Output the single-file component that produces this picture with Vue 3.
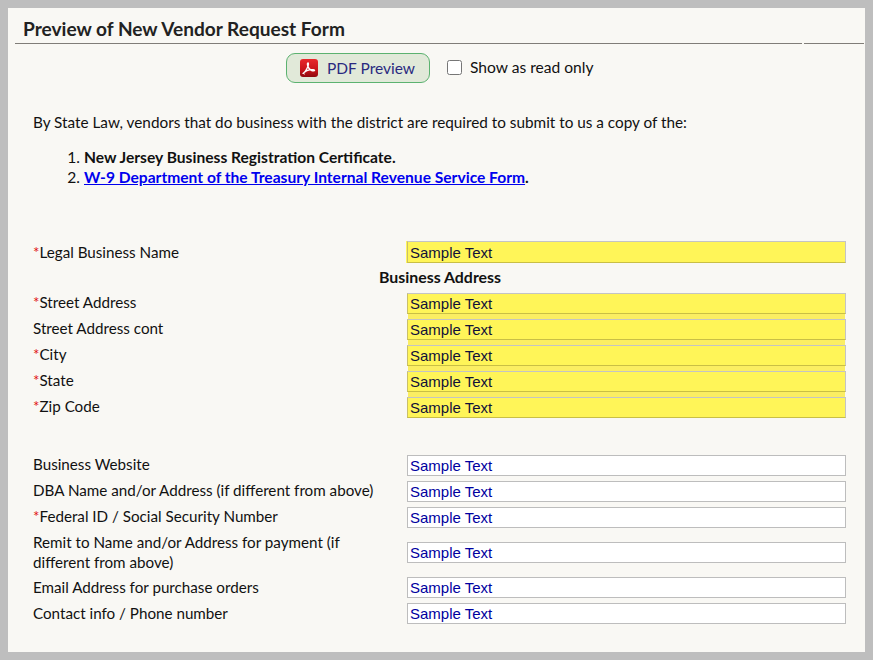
<script setup>
const required = [
  { label: 'Street Address', req: true },
  { label: 'Street Address cont', req: false },
  { label: 'City', req: true },
  { label: 'State', req: true },
  { label: 'Zip Code', req: true },
]
const optional = [
  { label: 'Business Website', req: false, up: true },
  { label: 'DBA Name and/or Address (if different from above)', req: false, up: true },
  { label: 'Federal ID / Social Security Number', req: true, up: true },
  { label: 'Remit to Name and/or Address for payment (if different from above)', req: false },
  { label: 'Email Address for purchase orders', req: false },
  { label: 'Contact info / Phone number', req: false },
]
</script>

<template>
  <div class="frame">
    <div class="panel">
      <div class="head">
        <h1 class="title">Preview of New Vendor Request Form</h1>
        <div class="rule"><span class="rule-a"></span><span class="rule-b"></span></div>
      </div>

      <div class="actions">
        <button class="pdf" type="button">
          <svg class="pdf-icon" width="18" height="18" viewBox="0 0 18 18" aria-hidden="true">
            <defs>
              <linearGradient id="pdfg" x1="0" y1="0" x2="0" y2="1">
                <stop offset="0" stop-color="#e8282c" />
                <stop offset="0.6" stop-color="#c8141a" />
                <stop offset="1" stop-color="#8e0a0e" />
              </linearGradient>
            </defs>
            <rect width="18" height="18" rx="3" fill="url(#pdfg)" />
            <path d="M3.2 14.2c1.800-1 3.600-4 4.900-7.200.4-1.200.6-3-.1-3.200-.8 0-.7 1.900-.3 3 .9 2.600 2.500 4.400 4 4.900 1 .3 2.800.3 2.900-.4 0-.8-2.200-.9-4-.6-2.500.4-5 1.300-6.200 2.500-.5.500-.9 1-.8 1.200z" fill="none" stroke="#fff" stroke-width="1.300" />
          </svg>
          <span>PDF Preview</span>
        </button>
        <label class="check">
          <input type="checkbox" />
          <span>Show as read only</span>
        </label>
      </div>

      <p class="intro">By State Law, vendors that do business with the district are required to submit to us a copy of the:</p>
      <ol class="docs">
        <li><b>New Jersey Business Registration Certificate.</b></li>
        <li><b><a href="#">W-9 Department of the Treasury Internal Revenue Service Form</a>.</b></li>
      </ol>

      <div class="row first">
        <label class="lab"><span class="star">*</span>Legal Business Name</label>
        <input class="field req legal" value="Sample Text" readonly />
      </div>
      <div class="section">Business Address</div>
      <div v-for="r in required" :key="r.label" class="row up">
        <label class="lab"><span v-if="r.req" class="star">*</span>{{ r.label }}</label>
        <input class="field req stacked" value="Sample Text" readonly />
      </div>

      <div class="gap"></div>

      <div v-for="r in optional" :key="r.label" class="row" :class="{ up: r.up }">
        <label class="lab"><span v-if="r.req" class="star">*</span>{{ r.label }}</label>
        <input class="field" value="Sample Text" readonly />
      </div>
    </div>
  </div>
</template>

<style>
html, body { margin: 0; background: #bebebe; }
</style>

<style scoped>
.frame {
  box-sizing: border-box;
  width: 873px;
  height: 660px;
  padding: 8px;
  background: #bebebe;
  font-family: "Lato", "Liberation Sans", sans-serif;
  font-size: 15.2px;
  color: #111;
}
.panel {
  box-sizing: border-box;
  height: 644px;
  background: #f9f8f4;
  padding: 0 0 0 7px;
  overflow: hidden;
}
.head { height: 36px; display: flex; flex-direction: column; justify-content: flex-end; }
.title {
  margin: 0 0 0 8px;
  font-size: 19.1px;
  line-height: 24px;
  font-weight: 700;
  color: #222;
  padding-bottom: 2px;
}
.rule { display: flex; gap: 2px; height: 1px; }
.rule-a { width: 787px; background: #807d78; }
.rule-b { width: 60px; background: #807d78; }
.actions {
  display: flex;
  align-items: center;
  margin: 9px 0 0 271px;
}
.pdf {
  box-sizing: border-box;
  display: flex;
  align-items: center;
  gap: 9px;
  width: 144px;
  height: 30px;
  padding: 0 0 0 13px;
  border: 1px solid #5cb270;
  border-radius: 9px;
  background: #e1e9d9;
  color: #2a2a80;
  font: inherit;
  font-size: 15.5px;
}
.pdf-icon { flex: none; }
.check {
  display: flex;
  align-items: center;
  margin: 0 0 2px 17px;
  font-size: 15.6px;
}
.check input {
  width: 15px;
  height: 15px;
  margin: 0 8px 0 0;
}
.intro { margin: 29px 0 0 18px; line-height: 20px; font-size: 15.3px; }
.docs { margin: 15px 0 0; padding-left: 69px; line-height: 20px; font-size: 15.6px; }
.docs a { color: #0000ee; }
.row {
  display: flex;
  align-items: center;
  min-height: 26px;
  padding-left: 18px;
}
.row.first { margin-top: 52px; }
.lab { width: 374px; line-height: 20px; flex: none; padding: 2px 24px 2px 0; box-sizing: border-box; }
.row.up .lab { padding: 1px 24px 3px 0; }
.star { color: #e01010; }
.field {
  box-sizing: border-box;
  width: 439px;
  height: 21px;
  padding: 0 2px;
  border: 1px solid #bdbdbd;
  background: #fff;
  color: #0000a0;
  font-family: "Liberation Sans", Arial, sans-serif;
  font-size: 15px;
  outline: none;
  border-radius: 0;
}
.field.req {
  position: relative;
  background: #fff558;
  color: #11113a;
  border-color: #c4c4c4 #c4c4c4 #c9bf45 #c9bf6a;
}
.field.legal { height: 22px; box-shadow: -1px 0 0 #fff558; }
.field.stacked { box-shadow: 0 6px 0 -1px #fbee62; }
.row:has(+ .gap) .field.stacked { box-shadow: none; }
.section { text-align: center; font-weight: 700; width: 850px; height: 25px; line-height: 23px; font-size: 15.9px; }
.gap { height: 32px; }
</style>
